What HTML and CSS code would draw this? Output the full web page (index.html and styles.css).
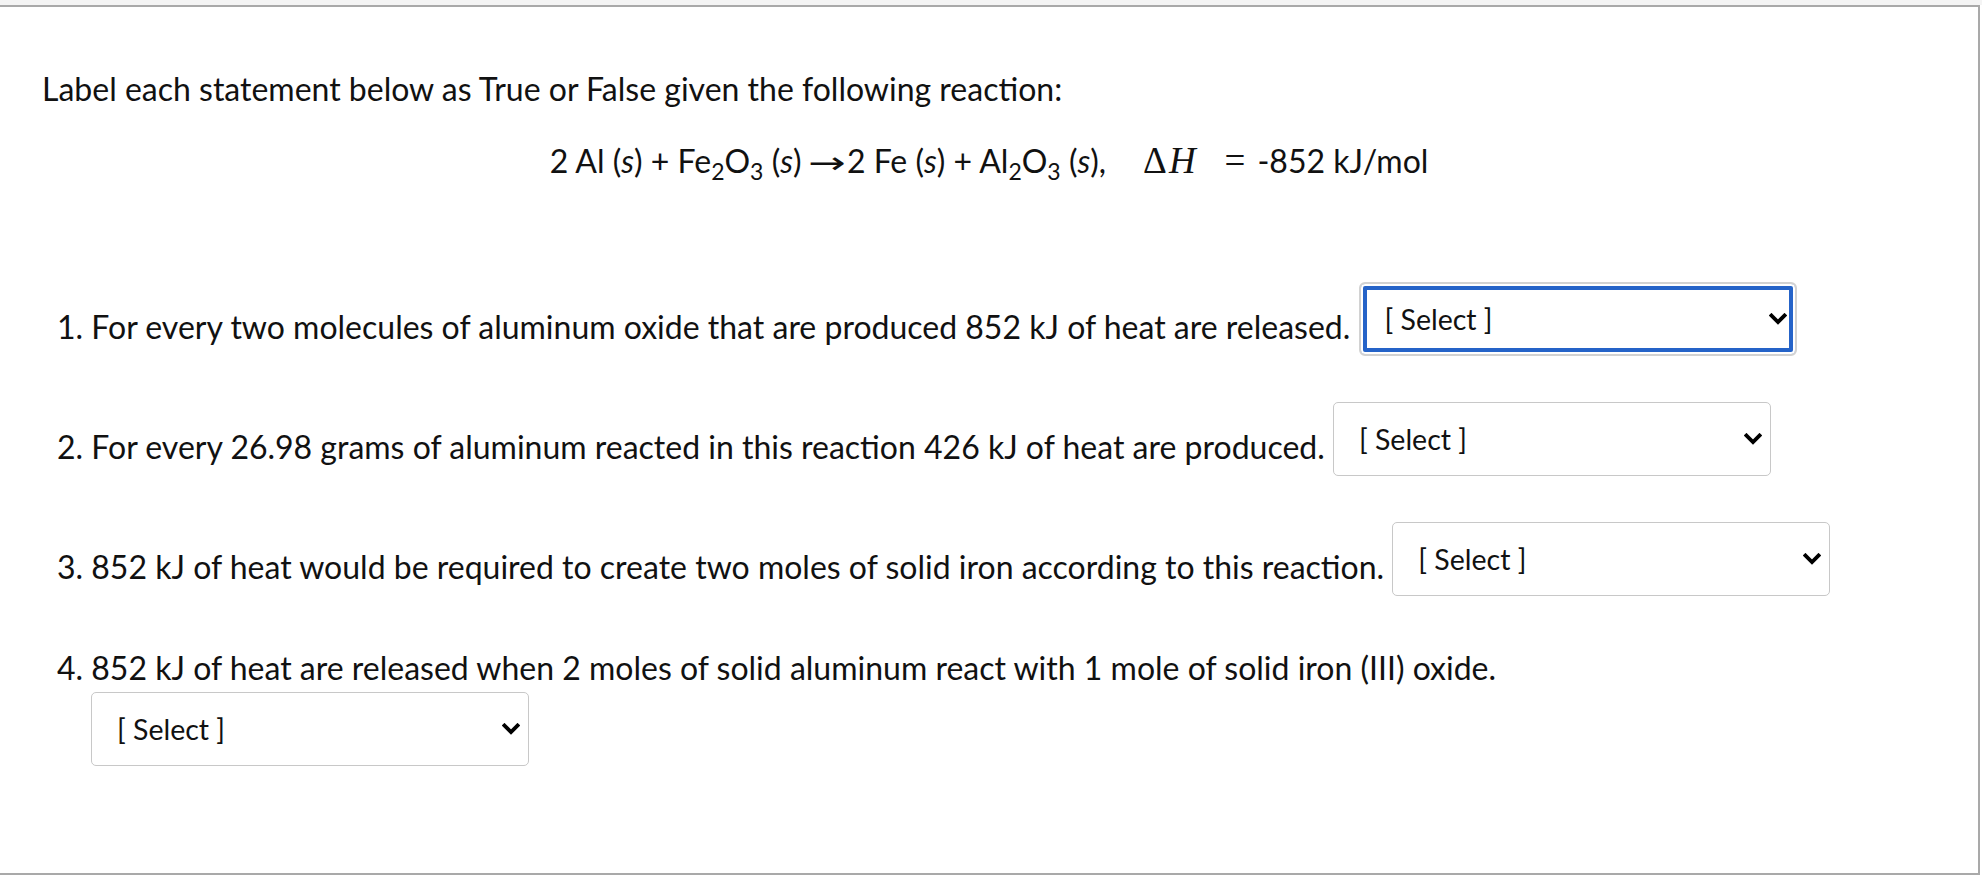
FILE: index.html
```html
<!DOCTYPE html>
<html lang="en">
<head>
<meta charset="utf-8">
<title>Quiz question</title>
<link rel="stylesheet" href="styles.css">
</head>
<body>
<div class="topband"></div>
<div class="frame">
  <div class="question">
    <p class="intro">Label each statement below as True or False given the following reaction:</p>
    <p class="eq">2 Al (<i>s</i>) + Fe<sub>2</sub>O<sub>3</sub> (<i>s</i>) <span class="arrow">→</span>2 Fe (<i>s</i>) + Al<sub>2</sub>O<sub>3</sub> (<i>s</i>),<span class="math"><span class="delta">Δ</span><span class="mi">H</span><span class="eqsign">=</span></span>-852 kJ/mol</p>
    <div class="items">
      <p class="item">1. For every two molecules of aluminum oxide that are produced 852 kJ of heat are released. <span class="sel focus"><span class="sel-text">[ Select ]</span><svg class="chev" width="18" height="12" viewBox="0 0 18 12"><polyline points="2.5,2.5 9,9 15.5,2.5" fill="none" stroke="#000" stroke-width="3.8" stroke-linejoin="miter" stroke-linecap="square"/></svg></span></p>
      <p class="item">2. For every 26.98 grams of aluminum reacted in this reaction 426 kJ of heat are produced. <span class="sel"><span class="sel-text">[ Select ]</span><svg class="chev" width="18" height="12" viewBox="0 0 18 12"><polyline points="2.5,2.5 9,9 15.5,2.5" fill="none" stroke="#000" stroke-width="3.8" stroke-linejoin="miter" stroke-linecap="square"/></svg></span></p>
      <p class="item item-3">3. 852 kJ of heat would be required to create two moles of solid iron according to this reaction. <span class="sel"><span class="sel-text">[ Select ]</span><svg class="chev" width="18" height="12" viewBox="0 0 18 12"><polyline points="2.5,2.5 9,9 15.5,2.5" fill="none" stroke="#000" stroke-width="3.8" stroke-linejoin="miter" stroke-linecap="square"/></svg></span></p>
      <p class="item item-4">4. 852 kJ of heat are released when 2 moles of solid aluminum react with 1 mole of solid iron (III) oxide. <span class="sel sel-wrap"><span class="sel-text">[ Select ]</span><svg class="chev" width="18" height="12" viewBox="0 0 18 12"><polyline points="2.5,2.5 9,9 15.5,2.5" fill="none" stroke="#000" stroke-width="3.8" stroke-linejoin="miter" stroke-linecap="square"/></svg></span></p>
    </div>
  </div>
</div>
</body>
</html>
```

FILE: styles.css
```css
html, body {
  margin: 0;
  padding: 0;
  background: #ffffff;
}

body {
  font-family: "Lato", "Liberation Sans", sans-serif;
  color: #111111;
  width: 1982px;
  height: 880px;
  overflow: hidden;
}

.topband {
  height: 5px;
  background: #f4f4f4;
}

.frame {
  width: 1980px;
  height: 870px;
  box-sizing: border-box;
  border-top: 2px solid #a9a9a9;
  border-right: 2px solid #a9a9a9;
  border-bottom: 2px solid #a9a9a9;
}

.question {
  padding: 34px 0 0 42px;
  font-size: 32px;
  line-height: 48px;
}

.question p {
  margin: 24px 0;
}

.eq {
  text-align: center;
  padding-right: 42px;
}

.eq i {
  font-style: italic;
}

.eq sub {
  font-size: 23px;
  line-height: 0;
  vertical-align: -7px;
}

.arrow {
  font-family: "DejaVu Sans", sans-serif;
  font-size: 30px;
  display: inline-block;
  transform: scaleX(1.5);
  margin: 0 8px 0 4px;
}

.math {
  font-family: "Liberation Serif", "DejaVu Serif", serif;
  font-size: 37px;
  margin-left: 37px;
}

.delta {
  margin-right: 2px;
}

.mi {
  font-style: italic;
}

.eqsign {
  margin: 0 12px 0 29px;
}

.items {
  margin-top: 95px;
  padding: 0 98px 0 15px;
}

.question .item {
  margin: 0 0 46px;
}

.question .item-3 {
  margin-bottom: 48px;
}

.sel {
  display: inline-flex;
  align-items: center;
  justify-content: space-between;
  box-sizing: border-box;
  width: 438px;
  height: 74px;
  margin-left: 0;
  padding: 0 8px 0 25px;
  border: 1px solid #c8c8c8;
  border-radius: 5px;
  background: #fff;
  vertical-align: 9px;
}

.sel.focus {
  border: 2px solid #d2d2d2;
  box-shadow: inset 0 0 0 2px #ffffff, inset 0 0 0 6px #2563c8;
  border-radius: 6px;
  padding: 0 8px 0 24px;
}

.sel-wrap {
  margin-left: 34px;
}

.sel-text {
  font-size: 28.5px;
  line-height: 34px;
}

.chev {
  display: block;
  flex: none;
}
```
